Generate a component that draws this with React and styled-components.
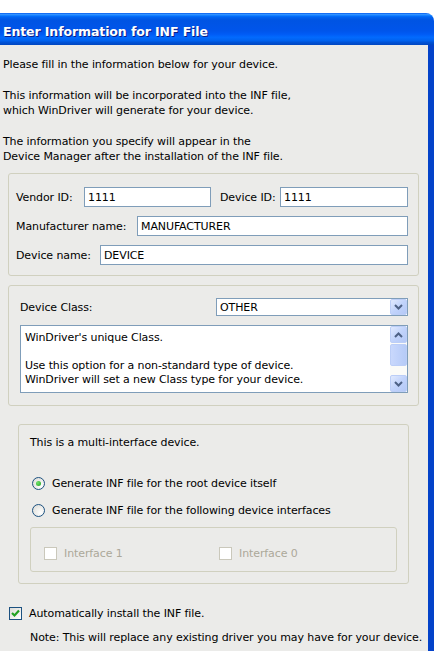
import React from 'react';
import styled, { createGlobalStyle } from 'styled-components';

const GlobalStyle = createGlobalStyle`
  html, body {
    margin: 0;
    padding: 0;
    background: #ffffff;
  }
  body {
    font-family: "DejaVu Sans", "Liberation Sans", sans-serif;
    font-size: 11px;
    letter-spacing: -0.1px;
    color: #000000;
  }
`;

const Page = styled.div`
  width: 434px;
  height: 651px;
  padding-top: 13px;
  box-sizing: border-box;
  overflow: hidden;
  background: #ffffff;
`;

const Window = styled.div`
  display: flex;
  flex-direction: column;
  height: 100%;
`;

const TitleBar = styled.div`
  height: 32px;
  box-sizing: border-box;
  padding: 4px 0 0 3px;
  display: flex;
  align-items: center;
  border-top-right-radius: 8px;
  background: linear-gradient(
    to bottom,
    #0058ee 0%, #3593ff 4%, #288eff 6%, #127dff 8%, #036ffc 10%,
    #0262ee 14%, #0057e5 20%, #0054e3 24%, #0055eb 56%, #005bf5 66%,
    #026afe 76%, #0062ef 86%, #0052d6 92%, #0046c0 100%
  );
  color: #ffffff;
  font-family: "DejaVu Sans", "Liberation Sans", sans-serif;
  font-weight: bold;
  font-size: 12.5px;
  letter-spacing: -0.1px;
  text-shadow: 1px 1px 0 #0a1f8a;
`;

const Body = styled.div`
  flex: 1;
  background: #ebebe9;
  border-right: 6px solid #0755e6;
  border-image: linear-gradient(to right, #3a82f4, #0a55e8 50%, #0342c9) 1;
`;

const Intro = styled.div`
  padding: 12px 0 0 3px;
  line-height: 15px;
`;

const Para = styled.p`
  margin: 0 0 16px;
  &:last-child {
    margin-bottom: 0;
  }
`;

const GroupBox = styled.div`
  margin: ${p => p.$margin};
  padding: ${p => p.$padding};
  border: 1px solid #d0d0bf;
  border-radius: 3px;
  display: flex;
  flex-direction: column;
  gap: ${p => p.$gap || 0}px;
`;

const Row = styled.div`
  display: flex;
  align-items: center;
  height: ${p => p.$h || 20}px;
`;

const Label = styled.span`
  flex: none;
  width: ${p => p.$w}px;
  margin-left: ${p => p.$ml || 0}px;
  white-space: nowrap;
`;

const TextInput = styled.input`
  box-sizing: border-box;
  height: 20px;
  width: ${p => (p.$w ? `${p.$w}px` : 'auto')};
  flex: ${p => (p.$w ? 'none' : 1)};
  min-width: 0;
  margin: 0;
  padding: 0 3px;
  border: 1px solid #7f9db9;
  background: #ffffff;
  font-family: inherit;
  font-size: 11px;
  letter-spacing: -0.1px;
  color: #000000;
  outline: none;
`;

const ComboBox = styled.div`
  box-sizing: border-box;
  width: 192px;
  height: 18px;
  display: flex;
  align-items: center;
  border: 1px solid #7f9db9;
  background: #ffffff;
  padding-left: 3px;
`;

const ComboValue = styled.span`
  flex: 1;
`;

const XpButton = styled.div`
  box-sizing: border-box;
  width: ${p => p.$w || 17}px;
  height: ${p => p.$h || 16}px;
  display: flex;
  align-items: center;
  justify-content: center;
  border: 1px solid #bccef7;
  border-radius: 2px;
  background: linear-gradient(to bottom right, #e1eafe, #c1d3fb 50%, #b4c8f6);
  flex: none;
`;

const ListBox = styled.div`
  box-sizing: border-box;
  height: 68px;
  display: flex;
  border: 1px solid #7f9db9;
  background: #ffffff;
`;

const ListText = styled.div`
  flex: 1;
  padding: 5px 4px 0;
  line-height: 14px;
  white-space: nowrap;
  overflow: hidden;
`;

const ScrollBar = styled.div`
  width: 17px;
  display: flex;
  flex-direction: column;
  background: #fbfbf8;
  flex: none;
`;

const ScrollThumb = styled.div`
  margin-top: 1px;
  height: 22px;
  box-sizing: border-box;
  border: 1px solid #bccef7;
  border-radius: 2px;
  background: linear-gradient(to right, #c9d8fc, #bfd1fa 50%, #b6cbf7);
`;

const ScrollGap = styled.div`
  flex: 1;
`;

const Option = styled.div`
  display: flex;
  align-items: center;
  gap: 7px;
  height: 16px;
  margin-top: ${p => p.$mt || 0}px;
  padding-left: ${p => p.$pl || 0}px;
  color: ${p => (p.$disabled ? '#aca899' : '#000000')};
  white-space: nowrap;
`;

const Radio = styled.span`
  box-sizing: border-box;
  width: 13px;
  height: 13px;
  border-radius: 50%;
  border: 1px solid #1c5180;
  background: radial-gradient(circle at 70% 70%, #ffffff, #dcdcd7 90%);
  display: flex;
  align-items: center;
  justify-content: center;
  flex: none;
  &::after {
    content: '';
    display: ${p => (p.$checked ? 'block' : 'none')};
    width: 5px;
    height: 5px;
    border-radius: 50%;
    background: radial-gradient(circle at 35% 35%, #70e26b, #21a121);
  }
`;

const Check = styled.span`
  box-sizing: border-box;
  width: 13px;
  height: 13px;
  border: 1px solid ${p => (p.$disabled ? '#cac8bb' : '#1c5180')};
  background: ${p =>
    p.$disabled ? '#ffffff' : 'linear-gradient(to bottom right, #dcdcd7, #ffffff)'};
  display: flex;
  align-items: center;
  justify-content: center;
  flex: none;
`;

const InnerBox = styled.div`
  margin-top: 9px;
  padding: 17px 0 10px 13px;
  border: 1px solid #d0d0bf;
  border-radius: 3px;
  display: grid;
  grid-template-columns: 175px auto;
`;

const Note = styled.div`
  margin: ${p => p.$margin};
  padding-left: ${p => p.$pl || 0}px;
  line-height: 14px;
  white-space: nowrap;
`;

const Chevron = ({ up }) => (
  <svg width="9" height="6" viewBox="0 0 9 6">
    <path
      d={up ? 'M1 5 L4.5 1.5 L8 5' : 'M1 1 L4.5 4.5 L8 1'}
      stroke="#4d6185"
      strokeWidth="2"
      fill="none"
    />
  </svg>
);

const CheckMark = () => (
  <svg width="9" height="9" viewBox="0 0 9 9">
    <path d="M1 4 L3.5 6.5 L8 1.5" stroke="#21a121" strokeWidth="2.2" fill="none" />
  </svg>
);

const App = () => {
  return (
    <Page>
      <GlobalStyle />
      <Window>
        <TitleBar>Enter Information for INF File</TitleBar>
        <Body>
          <Intro>
            <Para>Please fill in the information below for your device.</Para>
            <Para>
              This information will be incorporated into the INF file,
              <br />
              which WinDriver will generate for your device.
            </Para>
            <Para>
              The information you specify will appear in the
              <br />
              Device Manager after the installation of the INF file.
            </Para>
          </Intro>

          <GroupBox $margin="9px 9px 0 8px" $padding="13px 10px 10px 7px" $gap={9}>
            <Row>
              <Label $w={68}>Vendor ID:</Label>
              <TextInput $w={127} readOnly value="1111" />
              <Label $w={60} $ml={9}>Device ID:</Label>
              <TextInput readOnly value="1111" />
            </Row>
            <Row>
              <Label $w={121}>Manufacturer name:</Label>
              <TextInput readOnly value="MANUFACTURER" />
            </Row>
            <Row>
              <Label $w={84}>Device name:</Label>
              <TextInput readOnly value="DEVICE" />
            </Row>
          </GroupBox>

          <GroupBox $margin="9px 9px 0 8px" $padding="12px 10px 12px 11px" $gap={9}>
            <Row $h={18}>
              <Label $w={196}>Device Class:</Label>
              <ComboBox>
                <ComboValue>OTHER</ComboValue>
                <XpButton $w={17} $h={16}>
                  <Chevron />
                </XpButton>
              </ComboBox>
            </Row>
            <ListBox>
              <ListText>
                WinDriver's unique Class.
                <br />
                <br />
                Use this option for a non-standard type of device.
                <br />
                WinDriver will set a new Class type for your device.
              </ListText>
              <ScrollBar>
                <XpButton $w={17} $h={17}>
                  <Chevron up />
                </XpButton>
                <ScrollThumb />
                <ScrollGap />
                <XpButton $w={17} $h={17}>
                  <Chevron />
                </XpButton>
              </ScrollBar>
            </ListBox>
          </GroupBox>

          <GroupBox $margin="18px 19px 0 18px" $padding="11px 11px 11px 11px">
            <Note $margin="0">This is a multi-interface device.</Note>
            <Option $pl={2} $mt={25}>
              <Radio $checked />
              Generate INF file for the root device itself
            </Option>
            <Option $pl={2} $mt={11}>
              <Radio />
              Generate INF file for the following device interfaces
            </Option>
            <InnerBox>
              <Option $disabled>
                <Check $disabled />
                Interface 1
              </Option>
              <Option $disabled>
                <Check $disabled />
                Interface 0
              </Option>
            </InnerBox>
          </GroupBox>

          <Option $pl={9} $mt={21}>
            <Check>
              <CheckMark />
            </Check>
            Automatically install the INF file.
          </Option>
          <Note $margin="10px 0 0" $pl={30}>
            Note: This will replace any existing driver you may have for your device.
          </Note>
        </Body>
      </Window>
    </Page>
  );
};

export default App;
